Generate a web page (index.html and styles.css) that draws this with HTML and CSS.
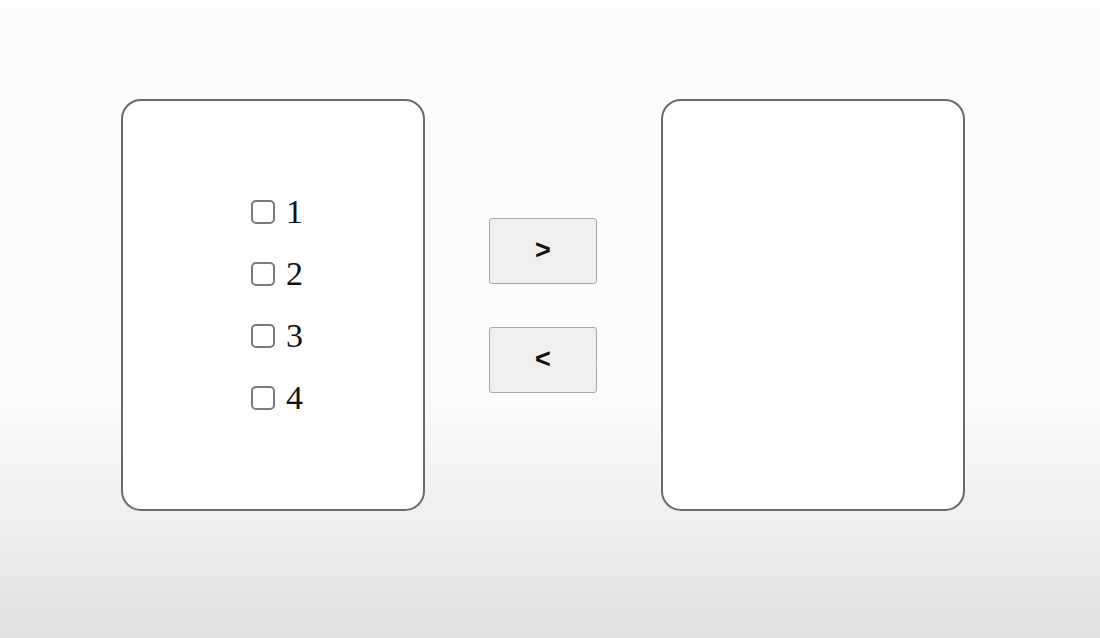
FILE: index.html
```html
<!DOCTYPE html>
<html lang="en">
<head>
<meta charset="UTF-8">
<meta name="viewport" content="width=device-width, initial-scale=1.0">
<title>Transfer List</title>
<link rel="stylesheet" href="styles.css">
</head>
<body>
    <div class="transfer">
        <div class="list-box">
            <label class="item"><input type="checkbox">1</label>
            <label class="item"><input type="checkbox">2</label>
            <label class="item"><input type="checkbox">3</label>
            <label class="item"><input type="checkbox">4</label>
        </div>
        <div class="actions">
            <button class="move-btn">&gt;</button>
            <button class="move-btn">&lt;</button>
        </div>
        <div class="list-box"></div>
    </div>
</body>
</html>
```

FILE: styles.css
```css
html, body {
    height: 100%;
}

body {
    margin: 0;
    font-family: "Liberation Serif", "Times New Roman", serif;
    background: linear-gradient(to bottom, #fdfdfd 0%, #fcfcfc 62%, #e2e2e2 100%);
}

.transfer {
    display: flex;
    align-items: center;
    gap: 64px;
    padding: 99px 0 0 121px;
}

.list-box {
    width: 300px;
    height: 408px;
    border: 2px solid #6a6a6a;
    border-radius: 20px;
    background-color: #fefefe;
    display: flex;
    flex-direction: column;
    justify-content: center;
    align-items: center;
    gap: 22px;
}

.item {
    display: flex;
    align-items: center;
    font-size: 34px;
    line-height: 40px;
    color: #111;
    padding-left: 8px;
}

.item input {
    appearance: none;
    -webkit-appearance: none;
    width: 24px;
    height: 24px;
    margin: 0 11px 0 0;
    border: 2px solid #7a7a7a;
    border-radius: 5px;
    background-color: #fff;
}

.actions {
    display: flex;
    flex-direction: column;
    gap: 43px;
}

.move-btn {
    width: 108px;
    height: 66px;
    border: 1px solid #a8a8a8;
    border-radius: 3px;
    background-color: #efefef;
    font-family: "Liberation Sans", Arial, sans-serif;
    font-size: 27px;
    font-weight: bold;
    color: #111;
    padding: 0;
}
```
